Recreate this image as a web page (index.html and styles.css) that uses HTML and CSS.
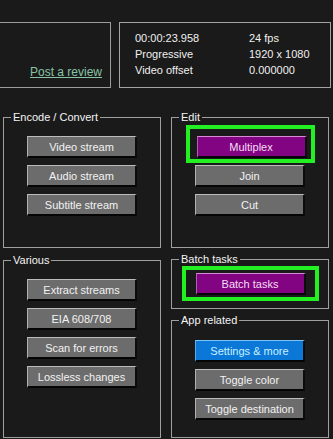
FILE: index.html
```html
<!DOCTYPE html>
<html lang="en">
<head>
    <meta charset="UTF-8">
    <meta name="viewport" content="width=device-width, initial-scale=1.0">
    <title>Toolbox</title>
    <link rel="stylesheet" href="styles.css">
</head>
<body>
    <div class="top">
        <div class="review-box">
            <a class="review" href="#">Post a review</a>
        </div>
        <div class="info-box">
            <span>00:00:23.958</span><span>24 fps</span>
            <span>Progressive</span><span>1920 x 1080</span>
            <span>Video offset</span><span>0.000000</span>
        </div>
    </div>

    <div class="panels">
        <div class="col">
            <fieldset class="group encode">
                <legend>Encode / Convert</legend>
                <button class="btn">Video stream</button>
                <button class="btn">Audio stream</button>
                <button class="btn">Subtitle stream</button>
            </fieldset>
            <fieldset class="group various">
                <legend>Various</legend>
                <button class="btn">Extract streams</button>
                <button class="btn">EIA 608/708</button>
                <button class="btn">Scan for errors</button>
                <button class="btn">Lossless changes</button>
            </fieldset>
        </div>
        <div class="col">
            <fieldset class="group edit">
                <legend>Edit</legend>
                <div class="highlight hl-edit">
                    <button class="btn btn-purple">Multiplex</button>
                </div>
                <button class="btn">Join</button>
                <button class="btn">Cut</button>
            </fieldset>
            <fieldset class="group batch">
                <legend>Batch tasks</legend>
                <div class="highlight hl-batch">
                    <button class="btn btn-purple">Batch tasks</button>
                </div>
            </fieldset>
            <fieldset class="group app">
                <legend>App related</legend>
                <button class="btn btn-blue">Settings &amp; more</button>
                <button class="btn">Toggle color</button>
                <button class="btn">Toggle destination</button>
            </fieldset>
        </div>
    </div>
</body>
</html>
```

FILE: styles.css
```css
body {
    margin: 0;
    background-color: #1a1a1a;
    color: #f0f0f0;
    font-family: "Liberation Sans", Arial, sans-serif;
    font-size: 11px;
    overflow: hidden;
}
.top {
    display: flex;
    padding-top: 22px;
}
.review-box {
    box-sizing: border-box;
    width: 121px;
    height: 66px;
    margin-left: -10px;
    border: 1px solid #9c9c9c;
    display: flex;
    align-items: flex-end;
    justify-content: flex-end;
    padding: 0 8px 8px 0;
}
.review {
    color: #86c4a4;
    text-decoration: underline;
    font-size: 12px;
}
.info-box {
    box-sizing: border-box;
    width: 212px;
    height: 66px;
    margin-left: 8px;
    border: 1px solid #a4a4a4;
    padding: 7px 0 0 15px;
    display: grid;
    grid-template-columns: 114px auto;
    grid-auto-rows: 16px;
    line-height: 16px;
}
.panels {
    display: flex;
    gap: 10px;
    padding-left: 3px;
    margin-top: 23px;
}
.col {
    width: 158px;
    display: flex;
    flex-direction: column;
}
.group {
    box-sizing: border-box;
    margin: 0;
    padding: 12px 0 0 0;
    border: 1px solid #a0a0a0;
    display: flex;
    flex-direction: column;
    align-items: center;
    gap: 7px;
}
.group legend {
    margin-left: 7px;
    padding: 0 2px;
    line-height: 13px;
    color: #f4f4f4;
}
.encode, .edit {
    height: 137px;
}
.various {
    height: 184px;
    margin-top: 6px;
}
.batch {
    height: 56px;
    margin-top: 5px;
    padding-top: 0;
}
.app {
    height: 124px;
    margin-top: 5px;
    padding-top: 13px;
}
.edit {
    padding-top: 1px;
    gap: 2px;
}
.edit .btn + .btn {
    margin-top: 5px;
}
.btn {
    box-sizing: border-box;
    width: 110px;
    height: 22px;
    padding: 0;
    font-family: inherit;
    font-size: 11px;
    color: #f2f2f2;
    background-color: #6c6c6c;
    border-top: 1px solid #bcbcbc;
    border-left: 1px solid #b0b0b0;
    border-right: 2px solid #0c0c0c;
    border-bottom: 2px solid #050505;
}
.btn-purple {
    background-color: #820482;
    border-top-color: #d48cd4;
    border-left-color: #b060b0;
    color: #f6dcf6;
}
.btn-blue {
    background-color: #0b78d8;
    border-top-color: #7cc4f4;
    border-left-color: #58aeea;
    color: #c8f0ff;
}
.highlight {
    border: 4px solid #22f022;
    box-sizing: border-box;
}
.hl-edit {
    width: 129px;
    padding: 7px 3px 1px 7px;
}
.hl-batch {
    width: 137px;
    padding: 3px 8px 2px 10px;
}
```
